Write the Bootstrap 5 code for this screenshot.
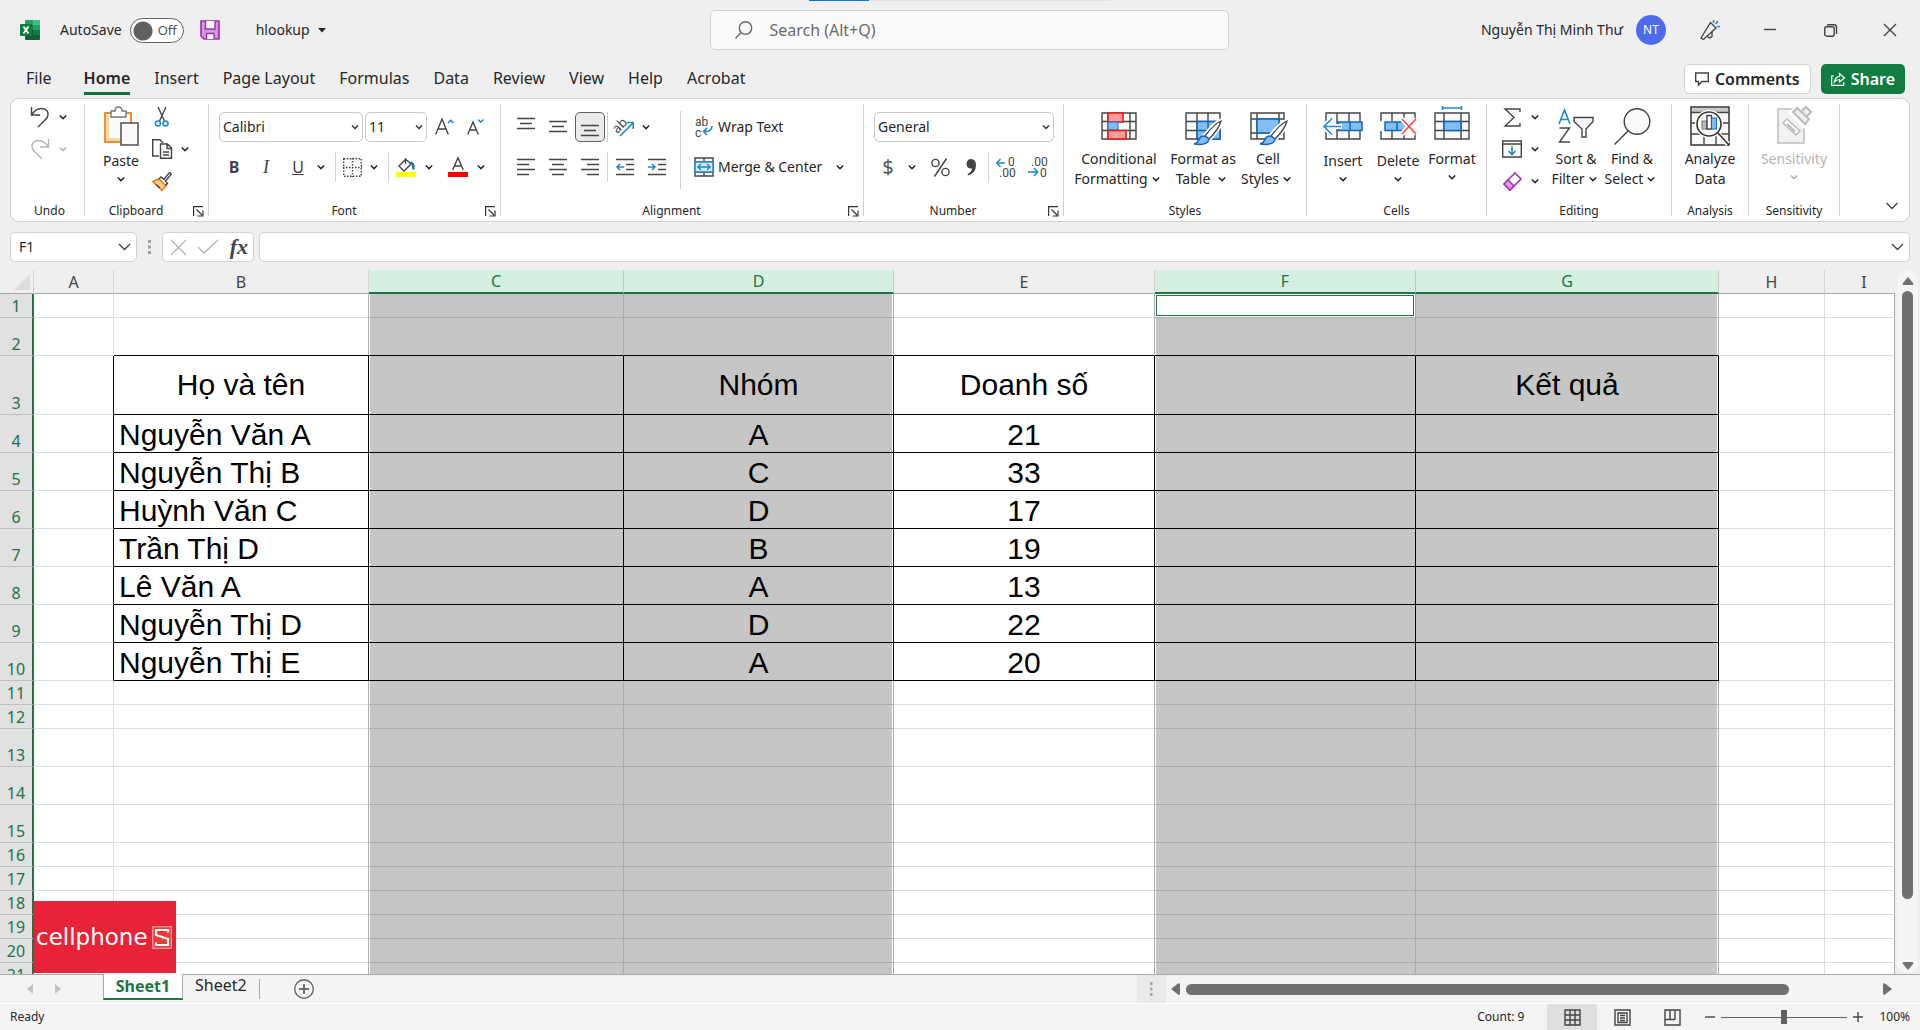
<!DOCTYPE html>
<html lang="vi">
<head>
<meta charset="utf-8">
<meta name="viewport" content="width=device-width, initial-scale=1">
<title>hlookup - Excel</title>
<link href="https://cdn.jsdelivr.net/npm/bootstrap@5.3.0/dist/css/bootstrap.min.css" rel="stylesheet">
<style>
:root{--ink:#262626;--green:#217346;--line:#d0d0d0;--chrome:#efefef;--strip:#f4f4f4;--blue:#1e8bcd;--dark:#707070}
body{font-family:"Noto Sans","Open Sans",sans-serif;font-size:14px;line-height:20px;color:var(--ink);background:var(--chrome)}
button{color:inherit;background:none;border:0;padding:0;font-size:14px;line-height:20px}
svg{display:block;flex:none;overflow:visible}
.s{fill:none;stroke:#444;stroke-width:1.4}
.s.pale{fill:#fafafa}
.s.mid{stroke:#666}
.s.dim{stroke:#b4b4b4}
.b{fill:none;stroke:var(--blue);stroke-width:1.6}
.bf{fill:#84bdf0;stroke:#1267b8;stroke-width:1.5}
.app{height:100vh}
/* title bar */
.titlebar{display:grid;grid-template-columns:37fr 27fr 36fr;height:60px}
.title-left{padding-left:20px}
.filename{margin-left:36px}
.progressline{left:809px;width:301px;height:1px;background:linear-gradient(90deg,#0078d4 60px,#e2e2e2 60px)}
.toggle{width:54px;height:25px}
.toggle input{appearance:none;width:54px;height:25px;margin:0;border:1px solid #606060;border-radius:13px;background:radial-gradient(circle at 12px 12px,#606060 9px,#fff 10px)}
.toggle span{position:absolute;left:28px;top:2px;font-size:13px;color:#555}
.searchbox{height:40px;margin-top:10px;background:#fafafa;border:1px solid #d2d2d2;border-radius:5px}
.searchbox input{font-size:16px;border:0;background:none;outline:0;color:#666}
.searchbox input::placeholder{color:#6a6a6a}
.avatar{width:30px;height:30px;margin:0 14px 0 13px;background:#4f6bed;color:#fff;font-size:12px}
/* tabs */
.tabsrow{height:38px}
.tablinks{padding-left:26px}
.tabsrow .tab{font-size:16px;line-height:24px;color:var(--ink);text-decoration:none;padding:6px 0;height:35px}
.tabsrow .tab.on{font-weight:600;box-shadow:inset 0 -3px #0f703b}
.tabsrow button{height:30px;font-size:16px;font-weight:600;border-radius:5px;gap:6px;padding:0 10px}
.tabactions{padding:4px 15px 0 0;gap:10px}
.comments{background:#fff;border:1px solid var(--line)!important}
.share{background:#107c41;color:#fff}
/* ribbon */
.ribbon{height:124px;background:#fff;border:1px solid var(--line);border-radius:9px;margin:0 10px}
.grp{padding-top:2px}
.grp .lbl{height:20px;font-size:12px;line-height:20px;text-align:center;position:relative}
.grp .lbl.more{padding-right:21px}
.grp .lbl button{position:absolute;right:4px;top:5px}
.divide{width:1px;background:var(--line);margin:5px 0}
.vsep{width:1px;background:var(--line)}
.w-undo{width:73px}.w-clip{width:123px}.w-font{width:291px}.w-align{width:362px}.w-num{width:199px}
.w-styles{width:242px}.w-cells{width:179px}.w-edit{width:184px}.w-ana{width:76px}.w-sens{width:90px}
.inset{padding-left:10px}
.inset-wide{padding-left:14px}
.ic{width:30px;height:30px;display:flex;align-items:center;justify-content:center}
.ic.slim{width:28px}
.ic.winbtn{width:60px;height:60px}
.r32{height:32px}
.arr{width:20px;height:30px;display:flex;align-items:center}
.arr.r32{height:32px}
.big{display:flex;flex-direction:column;align-items:center;padding-top:5px}
.big>svg{margin-bottom:3px}
.big.low>svg:first-child{margin-bottom:5px}
.big .two{display:flex;align-items:center;white-space:nowrap}
.b50{width:50px}.b52{width:52px}.b54{width:54px}.b70{width:70px}.b90{width:90px}
.two-rows{display:flex;flex-direction:column;gap:10px;padding-top:11px}
.tools{display:flex;gap:2px;height:30px}
.longsep{height:78px;margin:10px 9px 0 8px}
.drop{appearance:none;height:30px;border:1px solid #c8c8c8;border-radius:5px;padding:0 3px;color:var(--ink);background:#fff url("data:image/svg+xml,%3Csvg xmlns='http://www.w3.org/2000/svg' width='16' height='16'%3E%3Cpath d='M5 6.5l3 3 3-3' fill='none' stroke='%23333' stroke-width='1.5'/%3E%3C/svg%3E") no-repeat right -1px center}
.w-family{width:144px}.w-size{width:62px}.w-format{width:180px}
.glyph{font-size:16px;color:#444}
.glyph.ital{font-family:"Liberation Serif",serif;font-style:italic;font-size:18px}
.glyph.cash{font-size:20px;color:#555}
.glyph.fn{font-family:"Liberation Serif",serif;font-style:italic;font-weight:700;font-size:22px}
.tinytext{font-family:Roboto,sans-serif;font-size:12px;fill:#444}
.pressed{background:#ebebeb;border:1px solid #606060;border-radius:5px}
.faded{color:#b4b4b4}
.collapser{padding:0 11px 11px}
/* formula bar */
.fbar{padding:10px 10px 8px}
.fbox{height:30px;background:#fff;border:1px solid var(--line);border-radius:5px}
.fbox input{border:0;outline:0;background:none;min-width:0;color:var(--ink)}
.w-name{width:127px}.w-fx{width:92px;margin-right:5px;padding:0 5px 0 8px}
/* worksheet */
.workarea{flex:1 1 0;min-height:0}
.sheetwrap{overflow:hidden;min-width:0}
.gridtable{table-layout:fixed;width:100%;border-collapse:separate;border-spacing:0}
.gridtable th{font-weight:400;font-size:16px;line-height:22px;text-align:center;padding:0}
.gridtable thead th{height:24px;color:#444;border-bottom:1px solid #a8a8a8;border-right:1px solid #d4d4d4}
.gridtable thead th.hs{background:#d3f0e0;color:var(--green);border-bottom:2px solid var(--green);border-right-color:#c6cdc9;line-height:21px}
.gridtable thead th:last-child{border-right:0;padding-left:8px}
.gridtable tbody th{background:#e1e1e1;color:var(--green);border-bottom:1px solid #c0c0c0;border-right:2px solid var(--green);vertical-align:bottom}
.gridtable td{background:#fff;border-right:1px solid #dedede;border-bottom:1px solid #dedede;padding:0 5px;font-family:"Liberation Sans",Arial,sans-serif;font-size:30px;line-height:34px;color:#000;vertical-align:bottom;text-align:center;white-space:nowrap}
.gridtable td:last-child{border-right-color:#a8a8a8}
.gridtable td:nth-child(4),.gridtable td:nth-child(5),.gridtable td:nth-child(7),.gridtable td:nth-child(8){background:#c6c6c6;border-color:#ababab}
.gridtable td:nth-child(3),.gridtable td:nth-child(6){border-right-color:#ababab}
.gridtable td:nth-child(4),.gridtable td:nth-child(7){box-shadow:inset 1px 0 #fff}
.gridtable td:nth-child(5),.gridtable td:nth-child(8){box-shadow:inset -1px 0 #fff}
.gridtable .h24{height:24px}.gridtable .h38{height:38px}.gridtable .h59{height:59px}
.gridtable .h24 td{line-height:20px}
.gridtable .pre td:nth-child(n+3):nth-child(-n+8),.gridtable .data td:nth-child(n+3):nth-child(-n+8){border-bottom-color:#000}
.gridtable .data td:nth-child(n+2):nth-child(-n+8){border-right-color:#000}
.gridtable .data td:nth-child(3){text-align:left}
.gridtable .h59 td:nth-child(n){vertical-align:middle;text-align:center}
.gridtable td.active:nth-child(7){background:#fff;box-shadow:inset 0 0 0 1px #fff,inset 0 0 0 2px var(--green)}
.c-row{width:34px}.c-a{width:80px}.c-bc{width:255px}.c-d{width:270px}.c-ef{width:261px}.c-g{width:303px}.c-h{width:106px}
.brand{left:34px;bottom:1px;width:142px;height:72px;padding:0 4px 0 2px;background:#e92337;color:#fff;font-family:"DejaVu Sans",sans-serif;font-size:23px;line-height:26px}
.vscroll{flex:none;width:21px;margin:0 2px;background:#f5f5f5;border-radius:10px;padding:7px 0 4px}
.vscroll i{width:11px;height:608px;margin-top:6px;background:var(--dark);border-radius:6px}
.tabstrip{height:30px;background:var(--strip);border-top:1px solid #a8a8a8;border-bottom:1px solid #fff}
.tabstrip button{font-size:16px}
.sheetnav{width:103px;padding-left:27px;gap:22px}
.tabstrip .sheeton{width:80px;height:26px;margin-top:-1px;background:#fff;border:1px solid #a8a8a8;border-top:0;border-bottom:2px solid var(--green);color:var(--green);font-weight:700}
.tabstrip .vsep{background:#a8a8a8}
.addsheet{margin-left:34px}
.hbar{width:40.8%;padding-right:28px}
.hsplit{width:29px;margin-right:5px;background:#eaeaea}
.hthumb{height:11px;margin-left:6px;border-radius:6px;background:var(--dark);flex:0 1 603px}
.status{height:26px;padding:0 10px;background:var(--strip);font-size:12px}
.viewbtn{width:50px;height:26px;display:flex;align-items:center;justify-content:center}
.viewbtn.on{background:#dfdfdf}
.count{margin-right:23px}
.zoomctl{margin-left:8px;gap:6px}
.zoomctl span{margin-left:10px}
.zoomer{appearance:none;width:126px;height:14px;background:linear-gradient(#606060,#606060) center/100% 1px no-repeat;margin:0}
.zoomer::-webkit-slider-thumb{appearance:none;width:6px;height:14px;background:#606060}
</style>
</head>
<body>
<svg width="0" height="0" class="position-absolute" aria-hidden="true">
  <symbol id="cv" viewBox="0 0 16 16"><path d="M4.800 6.500 8 9.600l3.200-3.100" fill="none" stroke="currentColor" stroke-width="1.500"/></symbol>
  <symbol id="launch" viewBox="0 0 11 11"><path d="M.6 10V.6H10M3.500 3.500 9 9M10 4.500V10H4.500" fill="none" stroke="#333" stroke-width="1.200"/></symbol>
</svg>
<div class="app d-flex flex-column position-relative">
  <div class="progressline position-absolute top-0"></div>
  <header class="titlebar">
    <div class="title-left d-flex align-items-center">
      <svg width="20" height="20"><path d="M6 0h13q1 0 1 1v4H5V1q0-1 1-1z" fill="#21a366"/><path d="M13 0h6q1 0 1 1v4h-7z" fill="#33c481"/><path d="M5 5h8v5H5z" fill="#107c41"/><path d="M13 5h7v5h-7z" fill="#21a366"/><path d="M5 10h15v9q0 1-1 1H6q-1 0-1-1z" fill="#185c37"/><path d="M13 10h7v5h-7z" fill="#107c41"/><rect y="4" width="12" height="12" rx="1" fill="#107c41"/><path d="M3.500 6.500l5 7M8.500 6.500l-5 7" stroke="#fff" stroke-width="1.800"/></svg>
      <label for="autosave" class="ms-3 ps-1">AutoSave</label>
      <div class="toggle position-relative ms-2"><input type="checkbox" id="autosave"><span>Off</span></div>
      <button class="ms-3" aria-label="Save"><svg width="20" height="20"><path d="M1 1h18v18H4l-3-3z" fill="#d695df" stroke="#9b30a5" stroke-width="1.600"/><path d="M5.500 1v8h9.500V1M6.500 19v-5.500h7.500V19" fill="#fafafa" stroke="#9b30a5" stroke-width="1.400"/></svg></button>
      <button class="filename d-flex align-items-center gap-2">hlookup<svg width="8" height="5"><path d="M0 0h8L4 4.500z" fill="#262626"/></svg></button>
    </div>
    <div class="searchbox d-flex align-items-center px-4">
      <svg width="18" height="18"><circle cx="10.500" cy="7" r="6.200" class="s mid"/><path d="M6 11.500.5 17.500" class="s mid"/></svg>
      <input type="search" class="flex-grow-1 ms-3 p-0" placeholder="Search (Alt+Q)" aria-label="Search">
    </div>
    <div class="d-flex align-items-center justify-content-end">
      <span>Nguyễn Thị Minh Thư</span>
      <span class="avatar rounded-circle d-flex align-items-center justify-content-center">NT</span>
      <button class="winbtn ic" aria-label="Coming soon"><svg width="20" height="20"><path d="M1 18 10.500 2.500 16 8 3.500 19.500zM7 15.500q2 4 5 1V12" class="s"/><path d="M13.500 3V0M15.500 4 18 1M17 6.500h3" class="b"/></svg></button>
      <button class="winbtn ic" aria-label="Minimize"><svg width="12" height="12"><path d="M0 5.500h12" class="s"/></svg></button>
      <button class="winbtn ic" aria-label="Restore"><svg width="13" height="13"><rect x=".7" y="2.700" width="9.500" height="9.500" rx="2" class="s"/><path d="M3 .7h7q2.500 0 2.500 2.500V10" class="s"/></svg></button>
      <button class="winbtn ic" aria-label="Close"><svg width="12" height="12"><path d="M0 0l12 12M12 0 0 12" class="s"/></svg></button>
    </div>
  </header>

  <nav class="tabsrow d-flex align-items-start">
    <div class="tablinks d-flex gap-4">
      <a class="tab me-2" href="#">File</a><a class="tab on" href="#" aria-current="page">Home</a><a class="tab" href="#">Insert</a><a class="tab" href="#">Page Layout</a><a class="tab" href="#">Formulas</a><a class="tab" href="#">Data</a><a class="tab" href="#">Review</a><a class="tab" href="#">View</a><a class="tab" href="#">Help</a><a class="tab" href="#">Acrobat</a>
    </div>
    <div class="tabactions d-flex ms-auto">
      <button class="comments d-flex align-items-center"><svg width="14" height="14"><path d="M.7 1h12.600v8.500H7L3.500 13V9.500H.7z" class="s"/></svg>Comments</button>
      <button class="share d-flex align-items-center"><svg width="14" height="14"><path d="M3 4H.7v9.300h12V10M3.500 10q.5-5 5-5.500V1.500l5 4.500-5 4V7.500q-3 0-5 2.500z" fill="none" stroke="#fff" stroke-width="1.200"/></svg>Share</button>
    </div>
  </nav>

  <section class="ribbon d-flex">
    <div class="grp w-undo d-flex flex-column">
      <div class="flex-grow-1 inset-wide">
        <div class="d-flex r32"><button class="ic r32" aria-label="Undo"><svg width="20" height="20"><path d="M1.500 0v8H10M1.500 8Q6 1.500 11 1.500q7 0 7 6 0 3-4 6.500L8 20" class="s"/></svg></button><button class="arr r32" aria-label="Undo list"><svg width="16" height="16"><use href="#cv"/></svg></button></div>
        <div class="d-flex r32 faded"><button class="ic r32" aria-label="Redo"><svg width="20" height="20"><path d="M18.500 0v8H10M18.500 8Q14 1.500 9 1.500q-7 0-7 6 0 3 4 6.500l6 6" class="s dim"/></svg></button><button class="arr r32" aria-label="Redo list"><svg width="16" height="16"><use href="#cv"/></svg></button></div>
      </div>
      <div class="lbl ps-1">Undo</div>
    </div>
    <div class="divide"></div>
    <div class="grp w-clip d-flex flex-column">
      <div class="flex-grow-1 d-flex inset">
        <button class="big low b52"><svg width="34" height="40"><rect x="1" y="7" width="26" height="29" fill="#fafafa" stroke="#e8912d" stroke-width="2"/><path d="M3.500 9v24.500H25" fill="none" stroke="#fbd9a5" stroke-width="3"/><path d="M7 11V5h4q0-4 3.500-4T18 5h4v6z" fill="#fff" stroke="#777" stroke-width="1.400"/><rect x="17" y="17" width="17" height="22" fill="#fafafa" stroke="#444" stroke-width="1.400"/></svg><span>Paste</span><svg width="16" height="16"><use href="#cv"/></svg></button>
        <div>
          <button class="ic r32" aria-label="Cut"><svg width="14" height="20"><path d="M3 0 9.500 14M11 0 4.500 14" class="s"/><circle cx="3" cy="16.500" r="2.500" class="b"/><circle cx="10.500" cy="16.500" r="2.500" class="b"/></svg></button>
          <div class="d-flex"><button class="ic r32" aria-label="Copy"><svg width="20" height="20"><path d="M7 17H.7V.7H8l3 3" class="s"/><path d="M8.500 5h7l4 4v10.300h-11zM15 5v4.500h4.500M11 13h6M11 16h6" class="s"/></svg></button><button class="arr r32" aria-label="Copy list"><svg width="16" height="16"><use href="#cv"/></svg></button></div>
          <button class="ic r32" aria-label="Format Painter"><svg width="20" height="19"><path d="M1 9.500 7 7l7 7-4 4.500z" fill="#ffd08a" stroke="#e07b10" stroke-width="1.500"/><path d="M4 12.500 8 16M7 7 9 5l3 2.500L17 1q2-1 2 1.500L13.500 9l2 2.500-2 2" class="s"/></svg></button>
        </div>
      </div>
      <div class="lbl more">Clipboard<button aria-label="Clipboard settings"><svg width="11" height="11"><use href="#launch"/></svg></button></div>
    </div>
    <div class="divide"></div>
    <div class="grp w-font d-flex flex-column">
      <div class="flex-grow-1 two-rows inset">
        <div class="tools"><select class="drop w-family" aria-label="Font"><option>Calibri</option></select><select class="drop w-size" aria-label="Font size"><option>11</option></select>
          <button class="ic" aria-label="Increase font size"><svg width="19" height="20"><path d="M.7 17.500 7 2l6.300 15.500M3 12h8" class="s"/><path d="M13 6l2.700-2.700L18.500 6" class="b"/></svg></button>
          <button class="ic" aria-label="Decrease font size"><svg width="18" height="20"><path d="M.7 17.500 6 5l5.300 12.500M2.500 13h7" class="s"/><path d="M11 2.500l2.700 2.700 2.800-2.700" class="b"/></svg></button></div>
        <div class="tools">
          <button class="ic glyph fw-bold">B</button><button class="ic glyph ital">I</button>
          <div class="d-flex"><button class="ic glyph text-decoration-underline">U</button><button class="arr" aria-label="Underline list"><svg width="16" height="16"><use href="#cv"/></svg></button></div>
          <span class="vsep"></span>
          <div class="d-flex"><button class="ic slim" aria-label="Borders"><svg width="19" height="19"><path d="M.7.7h17.600v17.600H.7zM9.500 0v19M0 9.500h19" class="s" stroke-dasharray="1.500 1.500"/></svg></button><button class="arr" aria-label="Borders list"><svg width="16" height="16"><use href="#cv"/></svg></button></div>
          <span class="vsep"></span>
          <div class="d-flex"><button class="ic" aria-label="Fill colour"><svg width="20" height="20"><path d="M9.500 2.500 3 9l5 5 7-7-5.500-5V7" class="s"/><path d="M14.500 6.500q3-2 3 6" fill="none" stroke="#1670b8" stroke-width="2.500"/><path d="M0 15h20v5H0z" fill="#ff0"/></svg></button><button class="arr" aria-label="Fill colour list"><svg width="16" height="16"><use href="#cv"/></svg></button></div>
          <div class="d-flex"><button class="ic" aria-label="Font colour"><svg width="20" height="20"><path d="M4.700 13 10 .7 15.300 13M6.500 9h7" class="s"/><path d="M0 15h20v5H0z" fill="red"/></svg></button><button class="arr" aria-label="Font colour list"><svg width="16" height="16"><use href="#cv"/></svg></button></div>
        </div>
      </div>
      <div class="lbl more">Font<button aria-label="Font settings"><svg width="11" height="11"><use href="#launch"/></svg></button></div>
    </div>
    <div class="divide"></div>
    <div class="grp w-align d-flex flex-column">
      <div class="flex-grow-1 d-flex inset">
        <div class="two-rows">
          <div class="tools">
            <button class="ic" aria-label="Top align"><svg width="18" height="18"><path d="M0 .5h18M3 5.500h12M0 10.500h18" class="s"/></svg></button>
            <button class="ic" aria-label="Middle align"><svg width="18" height="18"><path d="M0 3.500h18M3 8.500h12M0 13.500h18" class="s"/></svg></button>
            <button class="ic pressed" aria-label="Bottom align"><svg width="18" height="18"><path d="M0 7.500h18M3 12.500h12M0 17.500h18" class="s"/></svg></button>
            <span class="vsep"></span>
            <div class="d-flex"><button class="ic slim" aria-label="Orientation"><svg width="20" height="20"><text x="0" y="15" font-size="13" fill="#444" transform="rotate(-45 4 12)">ab</text><path d="M6 19 19 6M13 5.500h6.200V12" class="b"/></svg></button><button class="arr" aria-label="Orientation list"><svg width="16" height="16"><use href="#cv"/></svg></button></div>
          </div>
          <div class="tools">
            <button class="ic" aria-label="Align left"><svg width="18" height="18"><path d="M0 1.500h18M0 6.500h12M0 11.500h18M0 16.500h12" class="s"/></svg></button>
            <button class="ic" aria-label="Center"><svg width="18" height="18"><path d="M0 1.500h18M3 6.500h12M0 11.500h18M3 16.500h12" class="s"/></svg></button>
            <button class="ic" aria-label="Align right"><svg width="18" height="18"><path d="M0 1.500h18M6 6.500h12M0 11.500h18M6 16.500h12" class="s"/></svg></button>
            <span class="vsep"></span>
            <button class="ic" aria-label="Decrease indent"><svg width="18" height="18"><path d="M0 1.500h18M10 6.500h8M10 11.500h8M0 16.500h18" class="s"/><path d="M8 9H1M4 6 1 9l3 3" class="b"/></svg></button>
            <button class="ic" aria-label="Increase indent"><svg width="18" height="18"><path d="M0 1.500h18M10 6.500h8M10 11.500h8M0 16.500h18" class="s"/><path d="M0 9h7M4 6l3 3-3 3" class="b"/></svg></button>
          </div>
        </div>
        <span class="vsep longsep"></span>
        <div class="two-rows">
          <button class="tools align-items-center gap-0"><span class="ic slim"><svg width="18" height="20"><text class="tinytext"><tspan x="0" y="9">ab</tspan><tspan x="0" y="20">c</tspan></text><path d="M17 9q0 6-8 5.500M12 11l-3.500 3.500L12 18" class="b"/></svg></span>Wrap Text</button>
          <div class="tools align-items-center"><button class="tools align-items-center gap-0"><span class="ic slim"><svg width="20" height="20"><path d="M1 1h18v18H1zM10 1v4M10 15v4M1 5h18M1 15h18" class="s"/><path d="M1 5h18v10H1z" fill="#d8ebf9" stroke="#1e8bcd" stroke-width="1.500"/><path d="M4 10h12M7 7l-3 3 3 3M13 7l3 3-3 3" class="b"/></svg></span>Merge &amp; Center</button><button class="arr ms-2" aria-label="Merge list"><svg width="16" height="16"><use href="#cv"/></svg></button></div>
        </div>
      </div>
      <div class="lbl more">Alignment<button aria-label="Alignment settings"><svg width="11" height="11"><use href="#launch"/></svg></button></div>
    </div>
    <div class="divide"></div>
    <div class="grp w-num d-flex flex-column">
      <div class="flex-grow-1 two-rows inset">
        <select class="drop w-format" aria-label="Number format"><option>General</option></select>
        <div class="tools">
          <button class="ic slim glyph cash">$</button><button class="arr" aria-label="Currency list"><svg width="16" height="16"><use href="#cv"/></svg></button>
          <button class="ic slim" aria-label="Percent"><svg width="19" height="19"><circle cx="4.500" cy="5" r="3.600" class="s"/><circle cx="14.500" cy="14" r="3.600" class="s"/><path d="M15.500.5 3.500 18.500" class="s"/></svg></button>
          <button class="ic" aria-label="Comma style"><svg width="11" height="17"><path d="M5 0q5 .3 5 6 0 8-8 10.500l-.5-1.500Q6 12.500 6 9.500q-5 .5-5.500-4.500Q1 0 5 0z" fill="#444"/></svg></button>
          <span class="vsep"></span>
          <button class="ic" aria-label="Increase decimal"><svg width="20" height="20"><path d="M9 6H1M4.500 2 .8 6l3.700 4" class="b"/><text class="tinytext"><tspan x="12" y="9">0</tspan><tspan x="3" y="20">.00</tspan></text></svg></button>
          <button class="ic" aria-label="Decrease decimal"><svg width="20" height="20"><path d="M0 15h9M6 11l3.700 4L6 19" class="b"/><text class="tinytext"><tspan x="3" y="9">.00</tspan><tspan x="12" y="20">0</tspan></text></svg></button>
        </div>
      </div>
      <div class="lbl more">Number<button aria-label="Number settings"><svg width="11" height="11"><use href="#launch"/></svg></button></div>
    </div>
    <div class="divide"></div>
    <div class="grp w-styles d-flex flex-column">
      <div class="flex-grow-1 d-flex gap-1 align-items-start inset">
        <button class="big b90"><svg width="36" height="40"><path d="M1 7h34v26H1zM7 7v26M29 7v26M1 15.500h34M1 24.500h34" class="s pale"/><rect x="7" y="7" width="15" height="9" fill="#ff9a9a" stroke="#e02020" stroke-width="1.600"/><rect x="7" y="16" width="10" height="8" fill="#7fbaf0" stroke="#1e6fc0"/><rect x="7" y="24.500" width="18" height="8.500" fill="#ff9a9a" stroke="#e02020" stroke-width="1.600"/></svg><span>Conditional</span><span class="two">Formatting<svg width="16" height="16"><use href="#cv"/></svg></span></button>
        <button class="big b70"><svg width="36" height="40"><path d="M1 7h34v26H1zM12 7v26M23 7v26M1 15.500h34M1 24.500h34" class="s pale"/><path d="M12 15.500h23V33H12zM23 15.500V33M12 24.500h23" class="bf"/><path d="M36 15Q30 17 20 30l4 3Q34 23 36 15z" fill="#fff" stroke="#fff" stroke-width="5"/><path d="M36 15Q30 17 20 30l4 3Q34 23 36 15z" fill="#fff" stroke="#444" stroke-width="1.300"/><path d="M9 38q4-1 5-5 4-6 10 0-1 7-15 5z" class="bf"/></svg><span>Format as</span><span class="two">Table<svg width="16" height="16" class="ms-1"><use href="#cv"/></svg></span></button>
        <button class="big b52"><svg width="36" height="40"><path d="M1 7h33v26H1zM7 7v26M29 7v26M1 13h33M1 27h33" class="s pale"/><rect x="7" y="13" width="22" height="14" class="bf"/><path d="M37 15Q31 17 21 30l4 3Q35 23 37 15z" fill="#fff" stroke="#fff" stroke-width="5"/><path d="M37 15Q31 17 21 30l4 3Q35 23 37 15z" fill="#fff" stroke="#444" stroke-width="1.300"/><path d="M10 38q4-1 5-5 4-6 10 0-1 7-15 5z" class="bf"/></svg><span>Cell</span><span class="two">Styles<svg width="16" height="16"><use href="#cv"/></svg></span></button>
      </div>
      <div class="lbl">Styles</div>
    </div>
    <div class="divide"></div>
    <div class="grp w-cells d-flex flex-column">
      <div class="flex-grow-1 d-flex gap-1 align-items-start inset">
        <button class="big low b52"><svg width="40" height="40"><path d="M3 7h34v26H3zM14 7v26M26 7v26" class="s pale"/><path d="M15 16h24v8.500H15zM27 16v8.500" class="bf"/><path d="M2 20.500h17M9 12.500l-8 8 8 8" fill="none" stroke="#fff" stroke-width="5"/><path d="M1 20.500h17M9 12.500l-8 8 8 8" class="b"/></svg><span>Insert</span><svg width="16" height="16"><use href="#cv"/></svg></button>
        <button class="big low b50"><svg width="40" height="40"><path d="M3 7h34v26H3zM14 7v26M26 7v26" class="s pale"/><path d="M0 15h40v10H0z" fill="#fff"/><path d="M7 16h20l4 4-4 4.500H7zM19 16v8.500" class="bf"/><path d="M24 13l14 15M38 13 24 28" stroke="#fff" stroke-width="5"/><path d="M24 13l14 15M38 13 24 28" stroke="#f04848" stroke-width="1.600"/></svg><span>Delete</span><svg width="16" height="16"><use href="#cv"/></svg></button>
        <button class="big b50"><svg width="36" height="40"><path d="M1 7h34v26H1zM10 7v26M27 7v26M1 15.500h34M1 24.500h34" class="s pale"/><rect x="10" y="15.500" width="17" height="9" class="bf"/><path d="M8.500 2h19M8.500 0v4M27.500 0v4" class="b"/></svg><span>Format</span><svg width="16" height="16"><use href="#cv"/></svg></button>
      </div>
      <div class="lbl">Cells</div>
    </div>
    <div class="divide"></div>
    <div class="grp w-edit d-flex flex-column">
      <div class="flex-grow-1 d-flex gap-1 align-items-start inset">
        <div>
          <div class="d-flex"><button class="ic r32" aria-label="AutoSum"><svg width="17" height="19"><path d="M16 4V1H1l9 8.500L1 18h15v-3" class="s"/></svg></button><button class="arr r32" aria-label="AutoSum list"><svg width="16" height="16"><use href="#cv"/></svg></button></div>
          <div class="d-flex"><button class="ic r32" aria-label="Fill"><svg width="20" height="18"><path d="M.7 1h18.600v16H.7zM.7 4h18.600" class="s"/><path d="M10 6v8M6.500 11l3.500 3.500 3.500-3.500" class="b"/></svg></button><button class="arr r32" aria-label="Fill list"><svg width="16" height="16"><use href="#cv"/></svg></button></div>
          <div class="d-flex"><button class="ic r32" aria-label="Clear"><svg width="19" height="19"><path d="M1 12 12 1l6 6L7 18z" fill="#fafafa" stroke="#a03bb0" stroke-width="1.600"/><path d="M1 12l4-4 6 6-4 4z" fill="#dc9be4" stroke="#a03bb0" stroke-width="1.600"/></svg></button><button class="arr r32" aria-label="Clear list"><svg width="16" height="16"><use href="#cv"/></svg></button></div>
        </div>
        <button class="big b50"><svg width="36" height="40"><path d="M1 18 6.500 4 12 18M3 13.500h7" class="b"/><path d="M1.500 22h10L1.500 36h10.500" class="s"/><path d="M16 11.500h19v4L28 23v8h-4v-8l-8-7.500z" class="s pale"/></svg><span>Sort &amp;</span><span class="two">Filter<svg width="16" height="16"><use href="#cv"/></svg></span></button>
        <button class="big b54"><svg width="36" height="40"><circle cx="23" cy="15.500" r="12.800" class="s pale"/><path d="M14 25 .5 38.500" class="s"/></svg><span>Find &amp;</span><span class="two">Select<svg width="16" height="16"><use href="#cv"/></svg></span></button>
      </div>
      <div class="lbl">Editing</div>
    </div>
    <div class="divide"></div>
    <div class="grp w-ana d-flex flex-column">
      <button class="big flex-grow-1"><svg width="40" height="40"><rect x="1" y="1" width="38" height="38" fill="#fafafa" stroke="#333" stroke-width="1.500"/><path d="M2 2h36v4H2z" fill="#c8c8c8"/><path d="M1 6.500h38M1 17h38M1 28h38M14 28v11M26 28v11" class="s"/><circle cx="19" cy="18" r="14" fill="#fff"/><path d="M28 28l10 10" stroke="#fff" stroke-width="5"/><circle cx="19" cy="18" r="12" fill="#fafafa" stroke="#333" stroke-width="1.600"/><path d="M28 27l11 12" stroke="#333" stroke-width="1.600"/><rect x="12" y="15" width="5" height="8" fill="#bbb" stroke="#777"/><rect x="17" y="9.500" width="4.500" height="13.500" fill="#fff" stroke="#333" stroke-width="1.300"/><rect x="21.500" y="12" width="5" height="11" fill="#7fbaf0" stroke="#1267b8"/></svg><span>Analyze</span><span>Data</span></button>
      <div class="lbl">Analysis</div>
    </div>
    <div class="divide"></div>
    <div class="grp w-sens d-flex flex-column">
      <button class="big flex-grow-1 faded" disabled><svg width="34" height="40"><path d="M1 3h26v34H1z" fill="#f2f2f2" stroke="#c0c0c0" stroke-width="1.600"/><path d="M15 7l5-5 12 11-5 6z" fill="#fff" stroke="#fff" stroke-width="5"/><path d="M6 17l4-4 13 12-4 4z" fill="#fff" stroke="#bbb" stroke-width="1.600"/><path d="M10 18l8 7.500" stroke="#bbb" stroke-width="2"/><path d="M16 6l4-4 12 11-4 5zM24 6l5-5 5 5-5 5" fill="#eee" stroke="#bbb" stroke-width="2"/></svg><span>Sensitivity</span><svg width="16" height="16"><use href="#cv"/></svg></button>
      <div class="lbl">Sensitivity</div>
    </div>
    <div class="divide"></div>
    <button class="collapser ms-auto align-self-end" aria-label="Collapse ribbon"><svg width="12" height="8"><path d="M.5 1 6 6.500 11.500 1" class="s"/></svg></button>
  </section>

  <div class="fbar d-flex align-items-center">
    <div class="fbox w-name d-flex align-items-center px-1"><input class="flex-grow-1 p-0 ms-1" value="F1" aria-label="Name box"><svg width="14" height="8"><path d="M1 1l5.500 5.500L12 1" class="s"/></svg></div>
    <svg width="25" height="14"><path d="M11 0h3v3h-3zM11 5.500h3v3h-3zM11 11h3v3h-3z" fill="#a0a0a0"/></svg>
    <div class="fbox w-fx d-flex align-items-center justify-content-between"><button aria-label="Cancel"><svg width="15" height="15"><path d="M0 0l15 15M15 0 0 15" class="s dim"/></svg></button><button aria-label="Enter"><svg width="20" height="14"><path d="M0 7l6 6L20 0" class="s dim"/></svg></button><button class="glyph fn" aria-label="Insert function">fx</button></div>
    <div class="fbox d-flex align-items-center flex-grow-1 pe-1"><input class="flex-grow-1" aria-label="Formula bar"><svg width="14" height="8"><path d="M1 1l5.500 5.500L12 1" class="s"/></svg></div>
  </div>

  <main class="workarea d-flex">
    <div class="sheetwrap flex-grow-1 position-relative">
      <table class="gridtable">
        <colgroup><col class="c-row"><col class="c-a"><col class="c-bc"><col class="c-bc"><col class="c-d"><col class="c-ef"><col class="c-ef"><col class="c-g"><col class="c-h"><col></colgroup>
        <thead><tr><th aria-label="Select all"><svg width="32" height="20"><path d="M30 2v16H14z" fill="#dcdcdc"/></svg></th><th>A</th><th>B</th><th class="hs">C</th><th class="hs">D</th><th>E</th><th class="hs">F</th><th class="hs">G</th><th>H</th><th>I</th></tr></thead>
        <tbody>
          <tr class="h24"><th>1</th><td></td><td></td><td></td><td></td><td></td><td class="active"></td><td></td><td></td><td></td></tr>
          <tr class="h38 pre"><th>2</th><td></td><td></td><td></td><td></td><td></td><td></td><td></td><td></td><td></td></tr>
          <tr class="h59 data"><th>3</th><td></td><td>Họ và tên</td><td></td><td>Nhóm</td><td>Doanh số</td><td></td><td>Kết quả</td><td></td><td></td></tr>
          <tr class="h38 data"><th>4</th><td></td><td>Nguyễn Văn A</td><td></td><td>A</td><td>21</td><td></td><td></td><td></td><td></td></tr>
          <tr class="h38 data"><th>5</th><td></td><td>Nguyễn Thị B</td><td></td><td>C</td><td>33</td><td></td><td></td><td></td><td></td></tr>
          <tr class="h38 data"><th>6</th><td></td><td>Huỳnh Văn C</td><td></td><td>D</td><td>17</td><td></td><td></td><td></td><td></td></tr>
          <tr class="h38 data"><th>7</th><td></td><td>Trần Thị D</td><td></td><td>B</td><td>19</td><td></td><td></td><td></td><td></td></tr>
          <tr class="h38 data"><th>8</th><td></td><td>Lê Văn A</td><td></td><td>A</td><td>13</td><td></td><td></td><td></td><td></td></tr>
          <tr class="h38 data"><th>9</th><td></td><td>Nguyễn Thị D</td><td></td><td>D</td><td>22</td><td></td><td></td><td></td><td></td></tr>
          <tr class="h38 data"><th>10</th><td></td><td>Nguyễn Thị E</td><td></td><td>A</td><td>20</td><td></td><td></td><td></td><td></td></tr>
          <tr class="h24"><th>11</th><td></td><td></td><td></td><td></td><td></td><td></td><td></td><td></td><td></td></tr>
          <tr class="h24"><th>12</th><td></td><td></td><td></td><td></td><td></td><td></td><td></td><td></td><td></td></tr>
          <tr class="h38"><th>13</th><td></td><td></td><td></td><td></td><td></td><td></td><td></td><td></td><td></td></tr>
          <tr class="h38"><th>14</th><td></td><td></td><td></td><td></td><td></td><td></td><td></td><td></td><td></td></tr>
          <tr class="h38"><th>15</th><td></td><td></td><td></td><td></td><td></td><td></td><td></td><td></td><td></td></tr>
          <tr class="h24"><th>16</th><td></td><td></td><td></td><td></td><td></td><td></td><td></td><td></td><td></td></tr>
          <tr class="h24"><th>17</th><td></td><td></td><td></td><td></td><td></td><td></td><td></td><td></td><td></td></tr>
          <tr class="h24"><th>18</th><td></td><td></td><td></td><td></td><td></td><td></td><td></td><td></td><td></td></tr>
          <tr class="h24"><th>19</th><td></td><td></td><td></td><td></td><td></td><td></td><td></td><td></td><td></td></tr>
          <tr class="h24"><th>20</th><td></td><td></td><td></td><td></td><td></td><td></td><td></td><td></td><td></td></tr>
          <tr class="h24"><th>21</th><td></td><td></td><td></td><td></td><td></td><td></td><td></td><td></td><td></td></tr>
        </tbody>
      </table>
      <div class="brand position-absolute d-flex align-items-center justify-content-between"><span>cellphone</span><svg width="20" height="23"><rect x=".7" y=".7" width="18.600" height="21.600" fill="#ea3a35" stroke="#f49aa2" stroke-width="1.300"/><path d="M16 6.500V4H4v5l12 4v6H4v-2.500" fill="none" stroke="#fff" stroke-width="2.200"/></svg></div>
    </div>
    <div class="vscroll d-flex flex-column align-items-center">
      <svg width="12" height="8"><path d="M6 0l5 6q1 2-1 2H2Q0 8 1 6z" fill="#707070"/></svg>
      <i></i>
      <svg width="12" height="8" class="mt-auto"><path d="M6 8l5-6q1-2-1-2H2Q0 0 1 2z" fill="#707070"/></svg>
    </div>
  </main>

  <div class="tabstrip d-flex">
    <div class="sheetnav d-flex align-items-center"><svg width="6" height="10"><path d="M6 0v10L0 5z" fill="#c2c2c2"/></svg><svg width="6" height="10"><path d="M0 0v10l6-5z" fill="#c2c2c2"/></svg></div>
    <button class="sheeton">Sheet1</button>
    <button class="px-2 align-self-start ms-1">Sheet2</button>
    <span class="vsep my-1 ms-1"></span>
    <button class="addsheet" aria-label="New sheet"><svg width="20" height="20"><circle cx="10" cy="10" r="9.300" class="s mid"/><path d="M10 5v10M5 10h10" stroke="#707070" stroke-width="2"/></svg></button>
    <div class="hbar d-flex ms-auto align-items-center">
      <span class="hsplit h-100 d-flex align-items-center justify-content-center"><svg width="3" height="14"><path d="M0 0h2.500v3H0zM0 5.500h2.500v3H0zM0 11h2.500v3H0z" fill="#a8a8a8"/></svg></span>
      <svg width="9" height="12"><path d="M0 6l7-5.500q2-1 2 1v9q0 2-2 1z" fill="#707070"/></svg>
      <span class="hthumb"></span>
      <svg width="9" height="12" class="ms-auto"><path d="M9 6 2 .5Q0-.5 0 1.500v9q0 2 2 1z" fill="#707070"/></svg>
    </div>
  </div>
  <footer class="status d-flex align-items-center">
    <span>Ready</span>
    <span class="count ms-auto">Count: 9</span>
    <button class="viewbtn on" aria-label="Normal"><svg width="17" height="17"><path d="M1 1h15v15H1zM6 1v15M11 1v15M1 6h15M1 11h15" class="s"/></svg></button>
    <button class="viewbtn" aria-label="Page layout"><svg width="17" height="17"><path d="M1 1h15v15H1zM4 4h9v9.500H4zM6 6.500h5M6 9h5M6 11.500h5" class="s"/></svg></button>
    <button class="viewbtn" aria-label="Page break preview"><svg width="17" height="17"><path d="M1 1h15v15H1zM6 1v9.500M11 1v9.500M1 10.500h10" class="s"/></svg></button>
    <div class="zoomctl d-flex align-items-center">
      <button aria-label="Zoom out"><svg width="10" height="10"><path d="M0 5h10" class="s"/></svg></button>
      <input type="range" class="zoomer" min="0" max="100" value="50" aria-label="Zoom">
      <button aria-label="Zoom in"><svg width="10" height="10"><path d="M0 5h10M5 0v10" class="s"/></svg></button>
      <span>100%</span>
    </div>
  </footer>
</div>
<script src="https://cdn.jsdelivr.net/npm/bootstrap@5.3.0/dist/js/bootstrap.bundle.min.js"></script>
</body>
</html>
